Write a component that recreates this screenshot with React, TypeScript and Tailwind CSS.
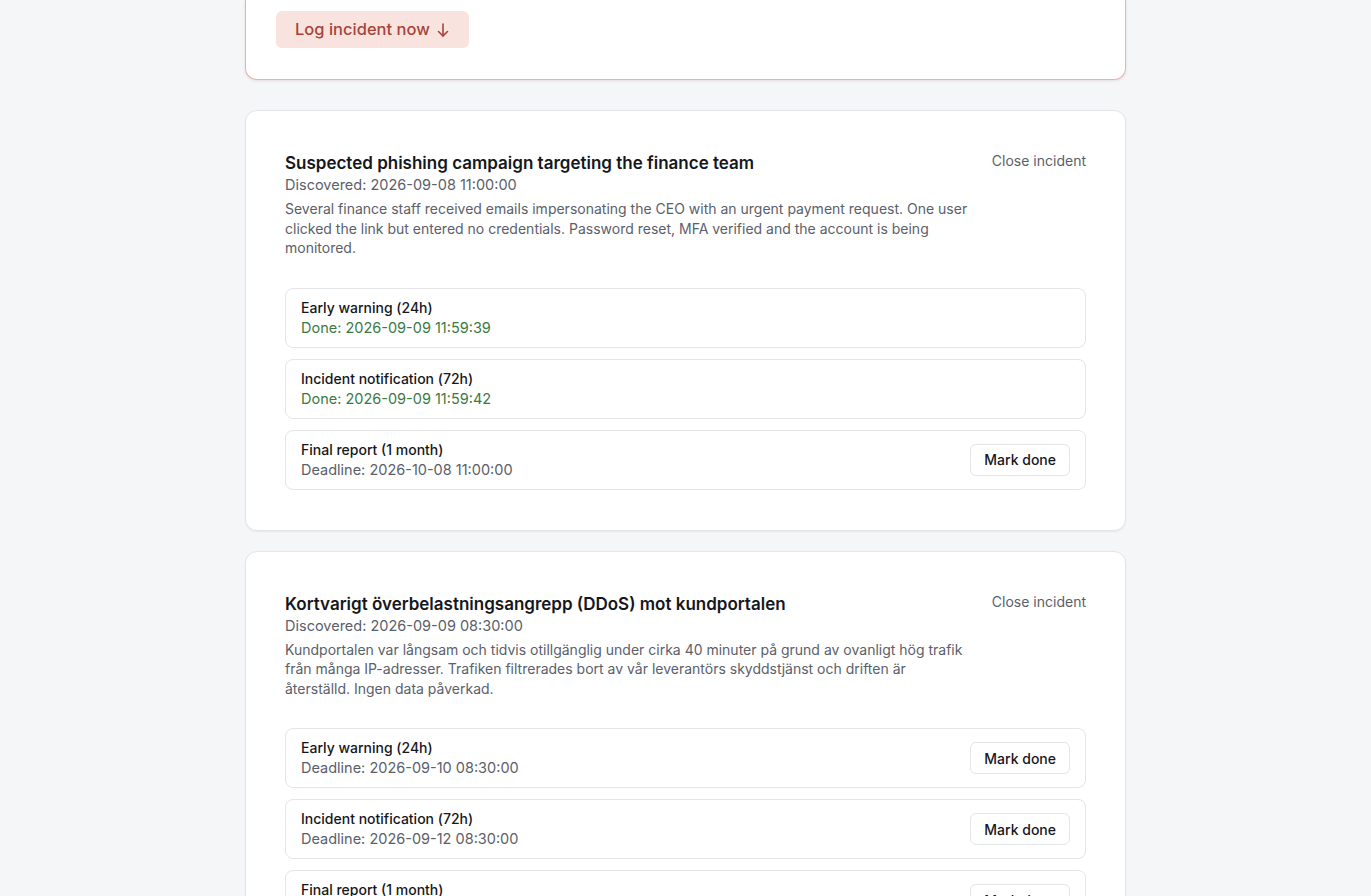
import React from 'react'

type Step = {
    label: string
    done?: string
    deadline?: string
}

type Incident = {
    title: string
    discovered: string
    description: string
    steps: Step[]
}

const INCIDENTS: Incident[] = [
    {
        title: 'Suspected phishing campaign targeting the finance team',
        discovered: '2026-09-08 11:00:00',
        description:
            'Several finance staff received emails impersonating the CEO with an urgent payment request. One user clicked the link but entered no credentials. Password reset, MFA verified and the account is being monitored.',
        steps: [
            { label: 'Early warning (24h)', done: '2026-09-09 11:59:39' },
            { label: 'Incident notification (72h)', done: '2026-09-09 11:59:42' },
            { label: 'Final report (1 month)', deadline: '2026-10-08 11:00:00' },
        ],
    },
    {
        title: 'Kortvarigt överbelastningsangrepp (DDoS) mot kundportalen',
        discovered: '2026-09-09 08:30:00',
        description:
            'Kundportalen var långsam och tidvis otillgänglig under cirka 40 minuter på grund av ovanligt hög trafik från många IP-adresser. Trafiken filtrerades bort av vår leverantörs skyddstjänst och driften är\nåterställd. Ingen data påverkad.',
        steps: [
            { label: 'Early warning (24h)', deadline: '2026-09-10 08:30:00' },
            { label: 'Incident notification (72h)', deadline: '2026-09-12 08:30:00' },
            { label: 'Final report (1 month)', deadline: '2026-10-09 08:30:00' },
        ],
    },
]

const StepRow = ({ step }: { step: Step }) => (
    <li className="flex items-center justify-between rounded-lg border border-[#e3e5e9] bg-white px-[15px] py-[9px]">
        <div className="flex flex-col">
            <span className="text-[14px] leading-5 font-medium text-[#15171c]">{step.label}</span>
            {step.done ? (
                <span className="text-[14.5px] leading-5 text-[#3b7a45]">Done: {step.done}</span>
            ) : (
                <span className="text-[14.5px] leading-5 text-[#5b606a]">Deadline: {step.deadline}</span>
            )}
        </div>
        {!step.done && (
            <button className="h-8 rounded-md border border-[#e3e5e9] bg-white px-[13px] text-[14px] font-medium text-[#15171c]">
                Mark done
            </button>
        )}
    </li>
)

const IncidentCard = ({ incident }: { incident: Incident }) => (
    <section className="rounded-xl border border-[#e3e5e9] bg-white px-[39px] py-10 shadow-[0_1px_2px_rgba(16,24,40,0.06)]">
        <div className="flex items-start justify-between gap-4">
            <div className="flex max-w-[710px] flex-col">
                <h3 className="text-[17px] leading-6 font-semibold text-[#15171c]">{incident.title}</h3>
                <p className="text-[14.5px] leading-5 text-[#5b606a]">Discovered: {incident.discovered}</p>
                <p className="mt-1 text-[14px] leading-[19.5px] whitespace-pre-line text-[#5b606a]">{incident.description}</p>
            </div>
            <button className="text-[14px] leading-5 whitespace-nowrap text-[#5b606a]">Close incident</button>
        </div>
        <ul className="mt-[30px] flex flex-col gap-[11px]">
            {incident.steps.map((s) => (
                <StepRow key={s.label} step={s} />
            ))}
        </ul>
    </section>
)

export default function App() {
    return (
        <div className="min-h-screen bg-[#f5f6f8] font-['Inter',sans-serif]">
            <div className="mx-auto flex w-[881px] flex-col pb-10">
                {/* Report block, scrolled partly out of view */}
                <section className="rounded-b-xl border border-t-0 border-[#e2b5b0] bg-white px-[30px] pt-[11px] pb-[31px] shadow-[0_1px_3px_rgba(120,40,30,0.12)]">
                    <button className="flex h-[37px] items-center gap-1.5 rounded-md bg-[#f9e3df] px-[19px] text-[16.5px] font-medium text-[#a8433a]">
                        Log incident now
                        <svg width="14" height="16" viewBox="0 0 14 16" fill="none" stroke="currentColor" strokeWidth="1.6" strokeLinecap="round" strokeLinejoin="round">
                            <path d="M7 2v12" />
                            <path d="M2.5 9.5L7 14l4.5-4.5" />
                        </svg>
                    </button>
                </section>
                <div className="mt-[30px] flex flex-col gap-5">
                    {INCIDENTS.map((i) => (
                        <IncidentCard key={i.title} incident={i} />
                    ))}
                </div>
            </div>
        </div>
    )
}
